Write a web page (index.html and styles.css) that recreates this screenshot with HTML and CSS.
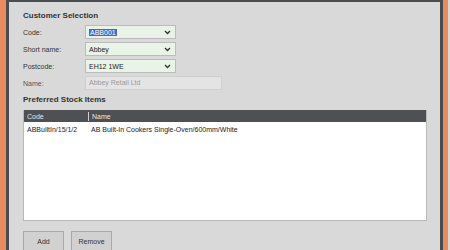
FILE: index.html
```html
<!DOCTYPE html>
<html lang="en">
<head>
  <meta charset="UTF-8">
  <title>Customer Selection</title>
  <link rel="stylesheet" href="styles.css">
</head>
<body>
  <div class="frame">
    <div class="panel">
      <h2>Customer Selection</h2>
      <div class="form">
        <label>Code:</label>
        <div class="combo"><span class="sel">ABB001</span>
          <svg class="chev" width="7" height="5" viewBox="0 0 7 5"><path d="M1 1 L3.5 3.5 L6 1" fill="none" stroke="#333" stroke-width="1.3"/></svg>
        </div>
        <label>Short name:</label>
        <div class="combo"><span>Abbey</span>
          <svg class="chev" width="7" height="5" viewBox="0 0 7 5"><path d="M1 1 L3.5 3.5 L6 1" fill="none" stroke="#333" stroke-width="1.3"/></svg>
        </div>
        <label>Postcode:</label>
        <div class="combo"><span>EH12 1WE</span>
          <svg class="chev" width="7" height="5" viewBox="0 0 7 5"><path d="M1 1 L3.5 3.5 L6 1" fill="none" stroke="#333" stroke-width="1.3"/></svg>
        </div>
        <label class="dim">Name:</label>
        <div class="readonly">Abbey Retail Ltd</div>
      </div>

      <h2 class="second">Preferred Stock Items</h2>
      <div class="grid">
        <div class="grid-head">
          <div class="col-code">Code</div>
          <div class="col-name">Name</div>
        </div>
        <div class="grid-body">
          <div class="grid-row">
            <div class="col-code">ABBuiltIn/15/1/2</div>
            <div class="col-name">AB Built-In Cookers Single-Oven/600mm/White</div>
          </div>
        </div>
      </div>

      <div class="buttons">
        <button>Add</button>
        <button>Remove</button>
      </div>
    </div>
  </div>
</body>
</html>
```

FILE: styles.css
```css
:root {
  --laranja: #e98b5f;
  --escuro: #4b4c50;
  --painel: #d9d9d9;
}
body {
  margin: 0;
  font-family: "Liberation Sans", Arial, sans-serif;
  color: #333;
  background: #d9d9d9;
}
.frame {
  height: 250px;
  width: 448px;
  background: var(--laranja);
  padding-left: 6px;
  padding-right: 5px;
  box-sizing: border-box;
  display: flex;
}
.panel {
  flex: 1;
  background: var(--painel);
  border-left: 3px solid var(--escuro);
  border-right: 3px solid var(--escuro);
  border-top: 2px solid var(--escuro);
  padding: 8px 13px 0 14px;
  overflow: hidden;
}
h2 {
  margin: 0 0 3px;
  font-size: 8px;
  line-height: 12px;
  font-weight: bold;
  color: #333;
}
h2.second {
  margin-top: 4px;
  margin-bottom: 4px;
}
.form {
  display: grid;
  grid-template-columns: 62px auto;
  grid-auto-rows: 14px;
  row-gap: 3px;
  justify-items: start;
  align-items: center;
  font-size: 7px;
}
.form label {
  color: #333;
}
.form label.dim {
  color: #555;
}
.combo {
  width: 91px;
  height: 14px;
  box-sizing: border-box;
  border: 1px solid #bcbcbc;
  background: #eaf3e7;
  display: flex;
  align-items: center;
  justify-content: space-between;
  padding: 0 4px 0 3px;
  color: #222;
}
.combo .sel {
  background: #3a6fc6;
  color: white;
  padding: 0 1px;
}
.chev {
  display: block;
}
.readonly {
  width: 137px;
  height: 14px;
  box-sizing: border-box;
  border: 1px solid #cfcfcf;
  background: #e4e4e4;
  color: #9a9a9a;
  padding: 0 3px;
  line-height: 12px;
}
.grid {
  height: 110px;
  background: white;
  border: 1px solid #b9b9b9;
  border-top: none;
  font-size: 7px;
}
.grid-head {
  height: 12px;
  background: #4f5054;
  color: #e6e6e6;
  display: flex;
  align-items: center;
}
.grid-head .col-code {
  border-right: 1px solid #cfcfcf;
  height: 9px;
  line-height: 9px;
}
.col-code {
  width: 61px;
  padding-left: 3px;
}
.col-name {
  padding-left: 3px;
}
.grid-row {
  display: flex;
  height: 14px;
  align-items: center;
  color: #222;
}
.buttons {
  margin-top: 10px;
  display: flex;
  gap: 7px;
}
.buttons button {
  width: 41px;
  height: 20px;
  background: #d1d1d1;
  border: 1px solid #a9a9a9;
  font-family: "Liberation Sans", Arial, sans-serif;
  font-size: 7px;
  color: #333;
  padding: 0;
}
```
